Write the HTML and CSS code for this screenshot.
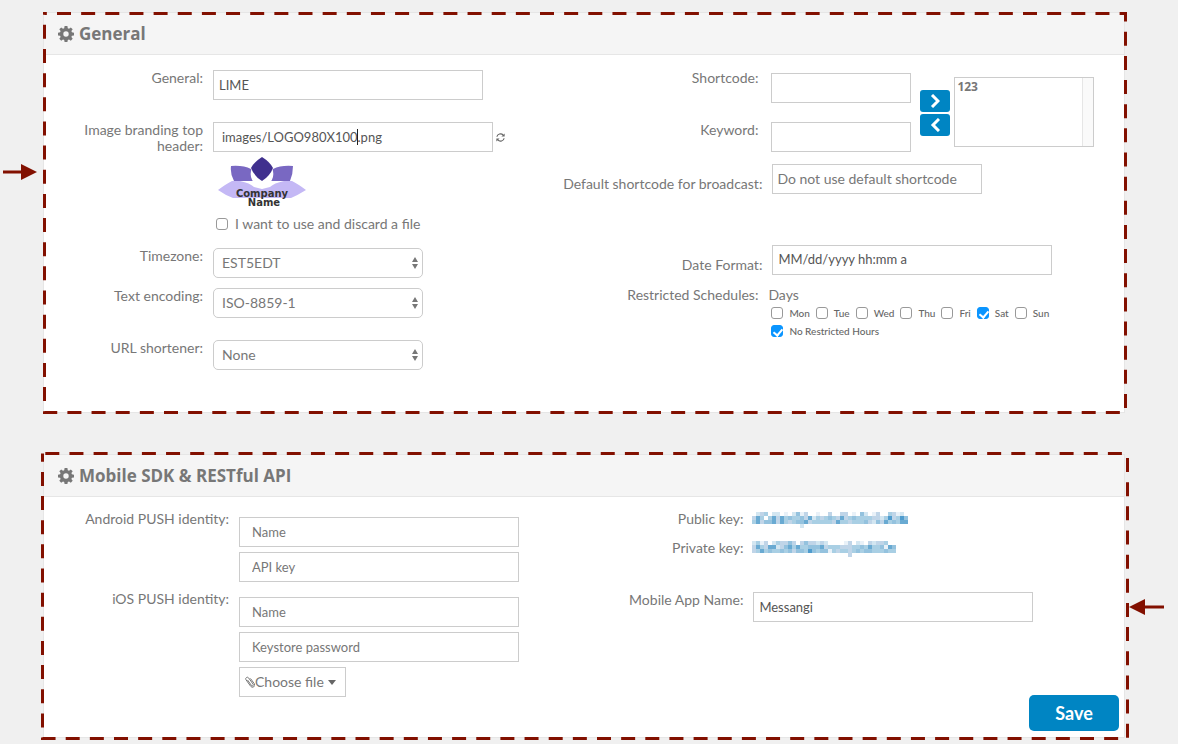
FILE: index.html
```
<!DOCTYPE html>
<html lang="en">
<head>
<meta charset="utf-8">
<title>Settings</title>
<link rel="stylesheet" href="styles.css">
</head>
<body>
<svg width="0" height="0" class="defs" aria-hidden="true">
  <symbol id="gear" viewBox="0 0 16 16"><path fill-rule="evenodd" d="M6.6 0h2.8l.4 2.200 1.200.5L12.800 1.400l1.900 1.900-1.300 1.800.5 1.200 2.100.4v2.700l-2.100.4-.5 1.200 1.300 1.800-1.900 1.900-1.800-1.300-1.200.5-.4 2.100H6.600l-.4-2.100-1.200-.5-1.800 1.300-1.900-1.900 1.300-1.800-.5-1.200L0 9.400V6.700l2.100-.4.5-1.200-1.300-1.800 1.900-1.900L5 2.700l1.200-.5zM8 5.300a2.700 2.700 0 1 0 0 5.400 2.700 2.700 0 0 0 0-5.400z"/></symbol>
</svg>
<main class="page">
  <section class="panel panel-general">
    <svg class="outline" aria-hidden="true"><rect x="1.5" y="1.5" stroke-dasharray="14 10.15" stroke-dashoffset="11.65"/></svg>
    <svg class="arrow arrow-left" viewBox="0 0 35 16" aria-hidden="true"><path d="M0 6.500h18V0l16 8-16 8V9.500H0z"/></svg>
    <h2 class="panel-title"><svg class="gear"><use href="#gear"/></svg>General</h2>
    <div class="panel-body">
      <div class="column">
        <div class="row">
          <label class="label" for="name">General:</label>
          <input class="field w-270" id="name" type="text" value="LIME">
        </div>
        <div class="row row-far">
          <label class="label" for="branding">Image branding top header:</label>
          <div class="stack">
            <div class="inline">
              <span class="editing"><input class="field w-280 medium" id="branding" type="text" value="images/LOGO980X100.png"></span>
              <button class="icon-button" type="button" aria-label="Refresh"><svg viewBox="0 0 10 10" width="9" height="9"><path d="M1 4.200A4 3.800 0 0 1 8 2.300M9 5.800A4 3.800 0 0 1 2 7.700" fill="none" stroke="#666" stroke-width="1.300"/><path d="M9.600.5v3.500H6zM.4 9.500V6H4z" fill="#666"/></svg></button>
            </div>
            <svg class="logo" viewBox="0 0 88 50" role="img" aria-label="Company Name">
              <path fill="#c4b8f5" d="M0 33Q8 27 14 24h8q10 2 14 6l8 2 8-2q4-4 14-6h8q6 3 14 9-8 5-15 8H15Q7 38 0 33z"/>
              <path fill="#7968c2" d="M13 9q12-1 20 3l8 12H16Q12 17 13 9zM75 9q-12-1-20 3l-8 12h25q3-7 3-15z"/>
              <path fill="#fff" d="M34 11q7 5 10 12 3-7 10-12 4 9-4 17l-4 1-2 3-2-3-4-1q-8-8-4-17z"/>
              <path fill="#40308e" d="M44 0q8 5 11 11-3 8-11 13-8-5-11-13 3-6 11-11z"/>
              <text x="44" y="40">Company</text><text x="46" y="49">Name</text>
            </svg>
            <label class="check"><input type="checkbox">I want to use and discard a file</label>
          </div>
        </div>
        <div class="row row-mid">
          <label class="label" for="tz">Timezone:</label>
          <div class="select-wrap"><select id="tz"><option>EST5EDT</option></select><svg viewBox="0 0 6 12"><path d="M0 5l3-5 3 5zM0 7h6l-3 5z"/></svg></div>
        </div>
        <div class="row row-near">
          <label class="label" for="enc">Text encoding:</label>
          <div class="select-wrap"><select id="enc"><option>ISO-8859-1</option></select><svg viewBox="0 0 6 12"><path d="M0 5l3-5 3 5zM0 7h6l-3 5z"/></svg></div>
        </div>
        <div class="row row-far">
          <label class="label" for="url">URL shortener:</label>
          <div class="select-wrap"><select id="url"><option>None</option></select><svg viewBox="0 0 6 12"><path d="M0 5l3-5 3 5zM0 7h6l-3 5z"/></svg></div>
        </div>
      </div>
      <div class="column">
        <div class="codes">
          <div class="codes-fields">
            <label class="label" for="short">Shortcode:</label><input class="field drop" id="short" type="text">
            <label class="label" for="keyword">Keyword:</label><input class="field" id="keyword" type="text">
          </div>
          <div class="movers">
            <button class="mover" type="button" aria-label="Add"><svg viewBox="0 0 10 14"><path d="M2 1l6 6-6 6"/></svg></button>
            <button class="mover" type="button" aria-label="Remove"><svg viewBox="0 0 10 14"><path d="M9 1L3 7l6 6"/></svg></button>
          </div>
          <select class="list" size="4" aria-label="Codes"><option>123</option></select>
        </div>
        <div class="row row-default">
          <label class="label low" for="def">Default shortcode for broadcast:</label>
          <select class="field w-210 plain" id="def"><option>Do not use default shortcode</option></select>
        </div>
        <div class="row row-date">
          <label class="label low" for="date">Date Format:</label>
          <input class="field w-280 date" id="date" type="text" value="MM/dd/yyyy hh:mm a">
        </div>
        <div class="row row-schedule" role="group" aria-labelledby="sched">
          <span class="label" id="sched">Restricted Schedules:</span>
          <div class="schedule">
            <div>Days</div>
            <div class="days">
              <label><input type="checkbox">Mon</label>
              <label><input type="checkbox">Tue</label>
              <label><input type="checkbox">Wed</label>
              <label><input type="checkbox">Thu</label>
              <label><input type="checkbox">Fri</label>
              <label><input type="checkbox" checked>Sat</label>
              <label><input type="checkbox">Sun</label>
            </div>
            <div class="days"><label><input type="checkbox" checked>No Restricted Hours</label></div>
          </div>
        </div>
      </div>
    </div>
  </section>

  <section class="panel panel-mobile">
    <svg class="outline" aria-hidden="true"><rect x="-0.5" y="-0.5" stroke-dasharray="14 10.15" stroke-dashoffset="-2.8"/></svg>
    <svg class="arrow arrow-right" viewBox="0 0 35 16" aria-hidden="true"><path d="M35 6.500H16V0L0 8l16 8V9.500h19z"/></svg>
    <h2 class="panel-title"><svg class="gear"><use href="#gear"/></svg>Mobile SDK &amp; RESTful API</h2>
    <div class="panel-body">
      <div class="column">
        <div class="row">
          <label class="label" for="android">Android PUSH identity:</label>
          <div class="stack inputs">
            <input class="field w-280 roomy" id="android" type="text" placeholder="Name">
            <input class="field w-280 roomy" type="text" placeholder="API key" aria-label="API key">
          </div>
        </div>
        <div class="row row-ios">
          <label class="label" for="ios">iOS PUSH identity:</label>
          <div class="stack inputs">
            <input class="field w-280 roomy" id="ios" type="text" placeholder="Name">
            <input class="field w-280 roomy" type="text" placeholder="Keystore password" aria-label="Keystore password">
            <button class="choose" type="button"><svg viewBox="0 0 10 12" width="10" height="12"><path d="M2.500 4l4 5.500a1 1 0 0 0 1.700-1.200L3.700 2A1.600 1.600 0 0 0 1 3.800l4.700 6.500a2.200 2.200 0 0 0 3.600-2.600L5.500 2.500" fill="none" stroke="#777"/></svg>Choose file<svg class="down" viewBox="0 0 8 5" width="8" height="5"><path d="M0 0h8L4 5z" fill="#666"/></svg></button>
          </div>
        </div>
      </div>
      <div class="column">
        <div class="row"><span class="label">Public key:</span><svg class="key" role="img" aria-label="Hidden public key" data-rows="023402201025130010030033010520130043120 364046364544536243454363454444332473475 463556364345563444443644344453253645466 000000000000200000000000000000000000000"></svg></div>
        <div class="row row-key"><span class="label">Private key:</span><svg class="key" role="img" aria-label="Hidden private key" data-rows="241302433530353323200001302103233400 364366235646445556344433344546445165 346454454535547545514344345455444544 000000000000000000000000300000000000"></svg></div>
        <div class="row row-app">
          <label class="label" for="app">Mobile App Name:</label>
          <input class="field w-280" id="app" type="text" value="Messangi">
        </div>
        <button class="save" type="submit">Save</button>
      </div>
    </div>
  </section>
</main>
<script src="keys.js"></script>
</body>
</html>
```
FILE: keys.js
```
// Draws the hidden keys as a mosaic; each digit picks a tint.
const tints = ['#ffffff', '#e9f1f8', '#d3e6f1', '#c0d5e8', '#a9cfe4', '#94c2de', '#69aad2', '#4f9cce'];
document.querySelectorAll('.key').forEach(svg => {
  svg.dataset.rows.split(' ').forEach((row, y) => {
    [...row].forEach((digit, x) => {
      const cell = document.createElementNS('http://www.w3.org/2000/svg', 'rect');
      cell.setAttribute('x', x * 4);
      cell.setAttribute('y', y * 4);
      cell.setAttribute('width', 4);
      cell.setAttribute('height', 4);
      cell.setAttribute('fill', tints[digit]);
      svg.append(cell);
    });
  });
});
```
FILE: styles.css
```
* { box-sizing: border-box; }
body { margin: 0; background: #f0f0f0; color: #777; font: 14px/16px Lato, sans-serif; }
input, select, button { margin: 0; color: inherit; font: inherit; }
.defs { position: absolute; }
.page { display: flex; flex-direction: column; gap: 41px; padding: 12px 53px 6px 43px; }

.panel { position: relative; background: #fff; border: 1px solid #e6e6e6; }
.panel-title { display: flex; align-items: center; gap: 5px; height: 42px; margin: 0; padding: 0 14px; background: #f5f5f5; border-bottom: 1px solid #e6e6e6; font: bold 17px/24px "Open Sans", sans-serif; }
.gear { width: 16px; height: 16px; fill: #777; }
.panel-body { display: grid; grid-template-columns: 48fr 52fr; }
.panel-general .panel-body { padding: 15px 0 42px; }
.panel-mobile .panel-body { padding: 14px 0 6px; }
.column { display: flex; flex-direction: column; min-width: 0; }

.outline { position: absolute; inset: -1px; width: calc(100% + 2px); height: calc(100% + 2px); overflow: visible; pointer-events: none; }
.outline rect { width: calc(100% - 1px); height: calc(100% - 2px); fill: none; stroke: #821000; stroke-width: 3px; }
.panel-mobile .outline rect { width: calc(100% + 3px); height: calc(100% + 1px); }
.arrow { position: absolute; width: 35px; height: 16px; fill: #821000; }
.arrow-left { left: -41px; top: 151px; }
.arrow-right { right: -40px; top: 144px; }

.row { display: flex; align-items: flex-start; gap: 10px; }
.row-near { margin-top: 10px; }
.row-far { margin-top: 22px; }
.row-mid { margin-top: 16px; }
.label { flex: none; width: 159px; padding-left: 24px; text-align: right; }
.panel-mobile .label { width: 185px; padding-left: 0; }
.column + .column .label { width: 196px; padding-left: 0; }
.column + .column .low { width: 200px; padding-top: 12px; }
.panel-mobile .column + .column .label { width: 181px; }

.field { height: 30px; padding: 0 5px; border: 1px solid #ccc; border-radius: 0; background: #fff; color: #555; font-size: 13px; outline: none; }
.medium { padding: 0 8px; }
.roomy { padding: 0 12px; }
.roomy::placeholder { color: #777; }
.date { padding-bottom: 3px; }
.w-210 { width: 210px; }
.w-270 { width: 270px; }
.w-280 { width: 280px; }
.plain { appearance: none; padding: 0 4px; color: #777; font-size: 14px; }
.stack { display: flex; flex-direction: column; align-items: flex-start; gap: 5px; }
.inputs { padding-top: 6px; }
.inline { display: flex; align-items: center; gap: 3px; }
.editing { position: relative; display: flex; }
.editing::after { content: ""; position: absolute; left: 144px; top: 7px; width: 1px; height: 16px; background: #222; }
.icon-button { display: flex; padding: 0; border: 0; background: none; }
.logo { width: 88px; height: 50px; margin-left: 5px; overflow: visible; }
.logo text { fill: #333; font: bold 10px "DejaVu Sans", sans-serif; text-anchor: middle; }

input[type=checkbox] { appearance: none; flex: none; width: 12px; height: 12px; border: 1px solid #999; border-radius: 3px; background: #fff; }
input[type=checkbox]:checked { position: relative; border-color: #0a95ff; background: #0a95ff; }
input[type=checkbox]:checked::after { content: ""; position: absolute; left: 3px; top: 1px; width: 4px; height: 7px; border: solid #fff; border-width: 0 2px 2px 0; transform: rotate(40deg); }
.check { display: flex; align-items: center; gap: 7px; margin: 4px 0 0 3px; }

.select-wrap { position: relative; width: 210px; }
.select-wrap select { width: 100%; height: 30px; padding: 0 8px; border: 1px solid #ccc; border-radius: 5px; background: #fff; appearance: none; }
.select-wrap svg { position: absolute; right: 5px; top: 9px; width: 6px; height: 12px; fill: #777; pointer-events: none; }

.codes { display: flex; align-items: flex-start; }
.codes-fields { display: grid; grid-template-columns: auto 140px; column-gap: 13px; row-gap: 19px; }
.drop { margin-top: 3px; }
.movers { display: flex; flex-direction: column; gap: 2px; margin: 20px 4px 0 9px; }
.mover { display: flex; align-items: center; justify-content: center; width: 30px; height: 22px; padding: 0; border: 0; border-radius: 3px; background: #0085c3; }
.mover svg { width: 10px; height: 14px; fill: none; stroke: #fff; stroke-width: 3px; }
.list { width: 140px; height: 70px; margin-top: 7px; padding: 0; border: 1px solid #ccc; border-radius: 0; background: linear-gradient(90deg, #e6e6e6 1px, #fafafa 1px) right / 11px 100% no-repeat #fff; outline: none; overflow: hidden; }
.list option { min-height: 0; padding: 0 2px; font: bold 12px/16px "Open Sans", sans-serif; }
.row-default { margin-top: 12px; }
.row-date { margin-top: 51px; }
.row-schedule { margin-top: 12px; }
.days { display: flex; gap: 6px; margin: 2px 0 0 3px; color: #666; font-size: 10px; font-weight: 500; }
.days label { display: flex; align-items: center; gap: 6px; }

.row-ios { margin-top: 9px; }
.row-key { margin-top: 12px; }
.row-app { margin-top: 35px; }
.key { width: 156px; height: 16px; margin: 1px 0 0 -1px; shape-rendering: crispEdges; }
.choose { display: flex; align-items: center; height: 30px; margin-bottom: 34px; padding: 0 9px 0 5px; border: 1px solid #ccc; background: #fff; }
.down { margin-left: 4px; }
.save { align-self: flex-end; width: 90px; height: 36px; margin: auto 5px 0; border: 0; border-radius: 5px; background: #0085c3; color: #fff; font-size: 18px; font-weight: bold; }
```
